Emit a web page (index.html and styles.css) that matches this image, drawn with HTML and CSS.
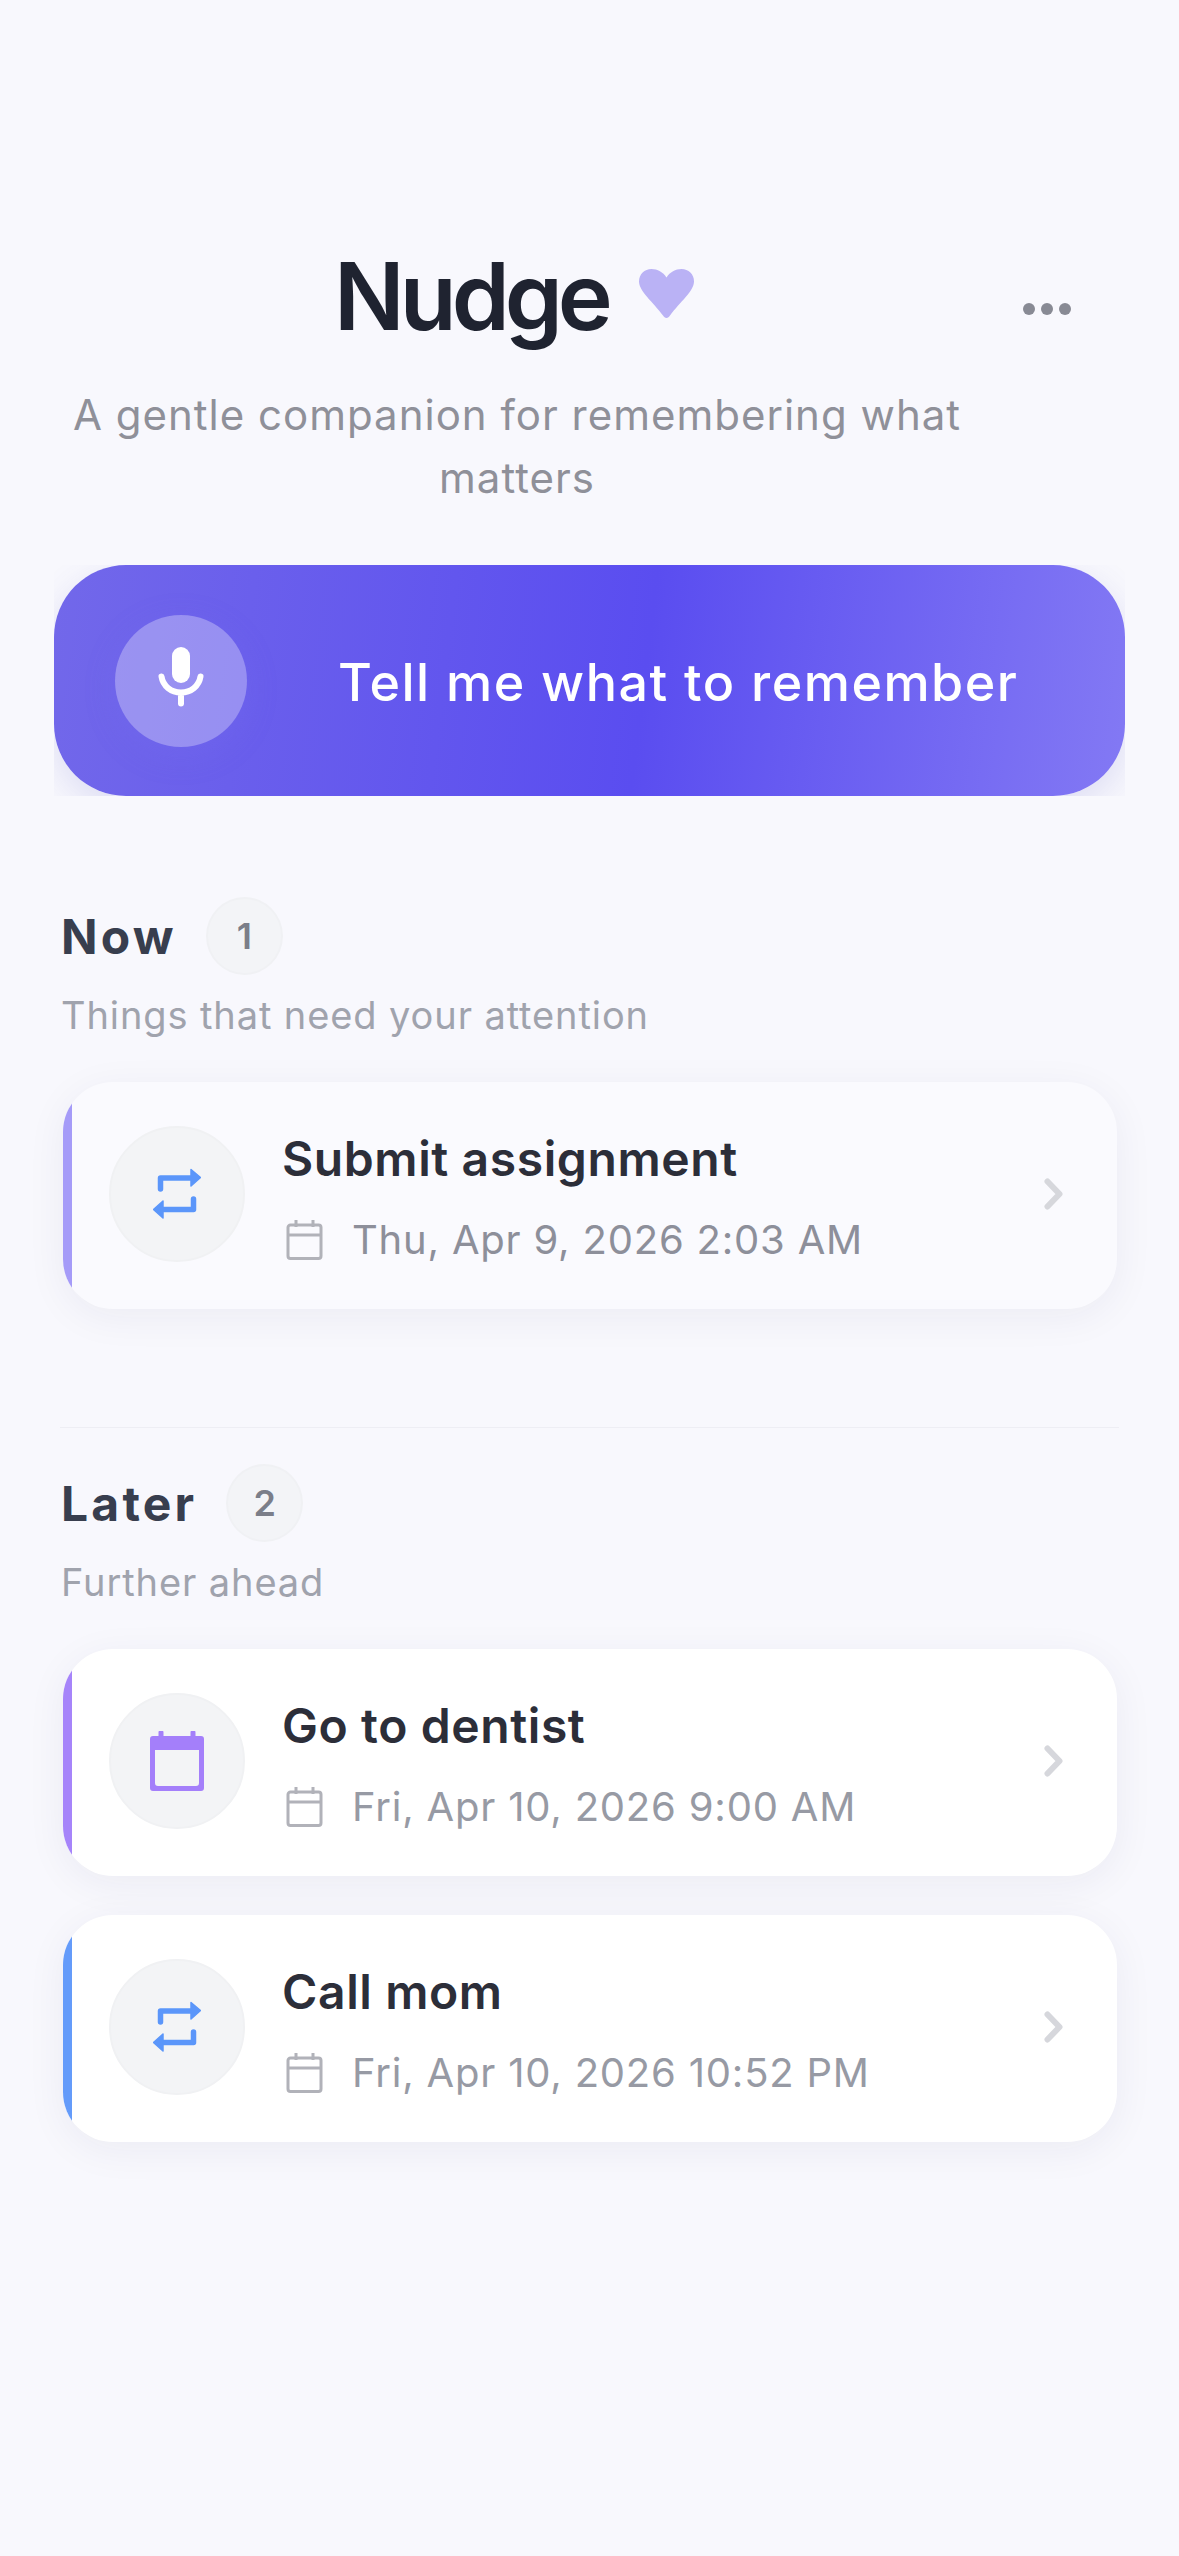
FILE: index.html
```html
<!DOCTYPE html>
<html lang="en">
<head>
<meta charset="utf-8">
<title>Nudge</title>
<link rel="stylesheet" href="styles.css">
</head>
<body>
<main class="app">
  <header class="header">
    <div class="brand">
      <h1 class="title-row">
        <span class="title">Nudge</span>
        <svg class="heart" viewBox="0 0 55 49"><path d="M27.5 49c-1.500 0-2.500-1-3.500-2.400C14 33 0 22 0 12.500 0 5 5.500 0 12.500 0c6 0 11.500 3 15 8.500C31 3 36.500 0 42.500 0 49.500 0 55 5 55 12.500 55 22 41 33 31 46.600 30 48 29 49 27.500 49z"/></svg>
      </h1>
      <p class="tagline">A gentle companion for remembering what matters</p>
    </div>
    <div class="menu"><span class="dot"></span><span class="dot"></span><span class="dot"></span></div>
  </header>

  <div class="cta-clip">
    <button class="cta">
      <span class="mic">
        <svg class="mic-icon" viewBox="0 0 48 60"><rect x="15" y="0" width="18" height="36" rx="9" fill="#fff"/><path d="M4.500 29.500C6 39 14 45.500 24 45.500S42 39 43.500 29.500M24 45.500v11" fill="none" stroke="#fff" stroke-width="6" stroke-linecap="round"/></svg>
      </span>
      <span class="cta-label">Tell me what to remember</span>
    </button>
  </div>

  <section class="section now">
    <div class="section-head"><h2 class="section-title">Now</h2><span class="badge">1</span></div>
    <p class="section-sub">Things that need your attention</p>
    <ul class="list">
      <li class="card card-soft">
        <span class="icon-wrap">
          <svg class="repeat" viewBox="0 0 48 51"><path d="M7.500 21V10H39M40.500 31v10.500H9" fill="none" stroke="#5b96fa" stroke-width="5.500" stroke-linecap="round" stroke-linejoin="round"/><path d="M38 1.500 47.500 9.500 38 18zM10 33 .5 41.500 10 50z" fill="#5b96fa" stroke="#5b96fa" stroke-width="1.500" stroke-linejoin="round"/></svg>
        </span>
        <div class="card-body">
          <div class="card-title">Submit assignment</div>
          <div class="card-date">
            <svg class="cal" viewBox="0 0 37 41"><path d="M10 1v7M27 1v7M2 16h33M4.500 6h28A2.500 2.500 0 0 1 35 8.500V37a2.500 2.500 0 0 1-2.500 2.500h-28A2.500 2.500 0 0 1 2 37V8.500A2.500 2.500 0 0 1 4.500 6z" fill="none" stroke="currentColor" stroke-width="3"/></svg>
            <span>Thu, Apr 9, 2026 2:03 AM</span>
          </div>
        </div>
        <svg class="chev" viewBox="0 0 19 32"><path d="M3.500 3.500 15.500 16 3.500 28.500" fill="none" stroke="#d6d7dc" stroke-width="6" stroke-linecap="round" stroke-linejoin="round"/></svg>
      </li>
    </ul>
  </section>

  <hr class="divider">

  <section class="section later">
    <div class="section-head"><h2 class="section-title">Later</h2><span class="badge">2</span></div>
    <p class="section-sub">Further ahead</p>
    <ul class="list">
      <li class="card card-purple">
        <span class="icon-wrap">
          <svg class="cal-big" viewBox="0 0 54 60"><path d="M11 1.500V8M43 1.500V8" stroke="#a47ffa" stroke-width="5" stroke-linecap="round"/><path d="M3 5h48a3 3 0 0 1 3 3v49a3 3 0 0 1-3 3H3a3 3 0 0 1-3-3V8a3 3 0 0 1 3-3zM5 19v33a3 3 0 0 0 3 3h38a3 3 0 0 0 3-3V19z" fill="#a47ffa" fill-rule="evenodd"/></svg>
        </span>
        <div class="card-body">
          <div class="card-title">Go to dentist</div>
          <div class="card-date">
            <svg class="cal" viewBox="0 0 37 41"><path d="M10 1v7M27 1v7M2 16h33M4.500 6h28A2.500 2.500 0 0 1 35 8.500V37a2.500 2.500 0 0 1-2.500 2.500h-28A2.500 2.500 0 0 1 2 37V8.500A2.500 2.500 0 0 1 4.500 6z" fill="none" stroke="currentColor" stroke-width="3"/></svg>
            <span>Fri, Apr 10, 2026 9:00 AM</span>
          </div>
        </div>
        <svg class="chev" viewBox="0 0 19 32"><path d="M3.500 3.500 15.500 16 3.500 28.500" fill="none" stroke="#d6d7dc" stroke-width="6" stroke-linecap="round" stroke-linejoin="round"/></svg>
      </li>
      <li class="card card-blue">
        <span class="icon-wrap">
          <svg class="repeat" viewBox="0 0 48 51"><path d="M7.500 21V10H39M40.500 31v10.500H9" fill="none" stroke="#5b96fa" stroke-width="5.500" stroke-linecap="round" stroke-linejoin="round"/><path d="M38 1.500 47.500 9.500 38 18zM10 33 .5 41.500 10 50z" fill="#5b96fa" stroke="#5b96fa" stroke-width="1.500" stroke-linejoin="round"/></svg>
        </span>
        <div class="card-body">
          <div class="card-title">Call mom</div>
          <div class="card-date">
            <svg class="cal" viewBox="0 0 37 41"><path d="M10 1v7M27 1v7M2 16h33M4.500 6h28A2.500 2.500 0 0 1 35 8.500V37a2.500 2.500 0 0 1-2.500 2.500h-28A2.500 2.500 0 0 1 2 37V8.500A2.500 2.500 0 0 1 4.500 6z" fill="none" stroke="currentColor" stroke-width="3"/></svg>
            <span>Fri, Apr 10, 2026 10:52 PM</span>
          </div>
        </div>
        <svg class="chev" viewBox="0 0 19 32"><path d="M3.500 3.500 15.500 16 3.500 28.500" fill="none" stroke="#d6d7dc" stroke-width="6" stroke-linecap="round" stroke-linejoin="round"/></svg>
      </li>
    </ul>
  </section>
</main>
</body>
</html>
```
FILE: styles.css
```css
* { box-sizing: border-box; }
html, body { margin: 0; padding: 0; }
body {
  min-height: 2556px;
  background: #f8f8fd;
  font-family: Inter, "Liberation Sans", sans-serif;
  overflow: hidden;
}
.app { padding: 240px 54px 0; }

.header { display: flex; align-items: flex-start; }
.brand { width: 926px; text-align: center; }
.title-row {
  margin: 0;
  padding-right: 6px;
  display: flex;
  justify-content: center;
  align-items: flex-start;
  gap: 31px;
}
.title {
  font-size: 93px;
  line-height: 112px;
  font-weight: 600;
  letter-spacing: -5px;
  color: #1f2330;
}
.heart { width: 55px; height: 49px; margin-top: 29px; fill: #bab2f5; }
.tagline {
  margin: 31px 0 0;
  font-size: 42px;
  line-height: 63px;
  letter-spacing: 1px;
  color: #8f9099;
}
.menu { display: flex; gap: 6px; margin: 63px 0 0 43px; }
.dot { width: 12px; height: 12px; border-radius: 50%; background: #888a94; }

.cta-clip {
  margin-top: 56px;
  height: 231px;
  overflow: hidden;
}
.cta {
  width: 100%;
  height: 231px;
  border: 0;
  border-radius: 72px;
  padding: 0 0 0 61px;
  display: flex;
  align-items: center;
  font-family: inherit;
  color: #fff;
  background: linear-gradient(97deg, #7268ea 0%, #5a4df0 55%, #8379f4 100%);
  box-shadow: 0 12px 36px rgba(80, 80, 190, .16);
}
.mic {
  width: 132px;
  height: 132px;
  flex: none;
  border-radius: 50%;
  background: rgba(255, 255, 255, .3);
  box-shadow: 0 8px 30px rgba(120, 110, 240, .25);
  display: flex;
  align-items: center;
  justify-content: center;
}
.mic-icon { width: 48px; height: 60px; margin-top: -8px; }
.cta-label {
  margin: 3px 0 0 91px;
  font-size: 52px;
  font-weight: 500;
  letter-spacing: 1.500px;
  white-space: nowrap;
}

.section { padding: 0 7px; }
.now { margin-top: 101px; }
.later { margin-top: 36px; }
.section-head { display: flex; align-items: center; height: 78px; }
.section-title {
  margin: 2px 0 0;
  font-size: 48px;
  line-height: 60px;
  font-weight: 700;
  letter-spacing: 3.200px;
  color: #383e4e;
}
.badge {
  width: 77px;
  height: 78px;
  margin-left: 29px;
  border-radius: 50%;
  background: #f3f4f7;
  border: 2px solid #f0f1f4;
  display: flex;
  align-items: center;
  justify-content: center;
  font-size: 36px;
  font-weight: 600;
  color: #7b7e89;
}
.section-sub {
  margin: 15px 0 0;
  font-size: 38px;
  line-height: 50px;
  letter-spacing: .9px;
  color: #a0a3ad;
}

.list {
  list-style: none;
  margin: 42px 0 0;
  padding: 0;
  display: flex;
  flex-direction: column;
  gap: 39px;
}
.card {
  position: relative;
  height: 227px;
  margin-left: 2px;
  width: 1054px;
  display: flex;
  align-items: center;
  padding: 0 54px 4px 46px;
  border-radius: 50px;
  background: #fff;
  overflow: hidden;
  box-shadow: 0 8px 40px rgba(40, 40, 80, .06);
}
.card::before {
  content: "";
  position: absolute;
  left: 0;
  top: 0;
  bottom: 0;
  width: 9px;
  background: #a684fa;
}
.card-soft { background: #fafafe; }
.card-soft::before { background: #a59bf8; }
.card-blue::before { background: #649bfa; }

.icon-wrap {
  width: 136px;
  height: 136px;
  flex: none;
  border-radius: 50%;
  background: #f3f4f6;
  border: 2px solid #f0f1f3;
  display: flex;
  align-items: center;
  justify-content: center;
}
.repeat { width: 48px; height: 51px; }
.cal-big { width: 54px; height: 60px; }
.card-body { margin-left: 37px; flex: 1; min-width: 0; padding-top: 6px; }
.card-title {
  font-size: 48px;
  line-height: 60px;
  font-weight: 600;
  letter-spacing: .6px;
  color: #2c2e39;
}
.card-date {
  margin-top: 26px;
  display: flex;
  align-items: center;
  gap: 29px;
  font-size: 40px;
  line-height: 50px;
  letter-spacing: .8px;
  color: #979aa4;
  padding-left: 4px;
}
.card-soft .card-date { color: #8d8f9a; }
.cal { width: 37px; height: 41px; flex: none; color: #b1b2b9; }
.chev { width: 19px; height: 32px; flex: none; }

.divider {
  margin: 118px 6px 0;
  border: 0;
  height: 1px;
  background: #eeeef4;
}
```
